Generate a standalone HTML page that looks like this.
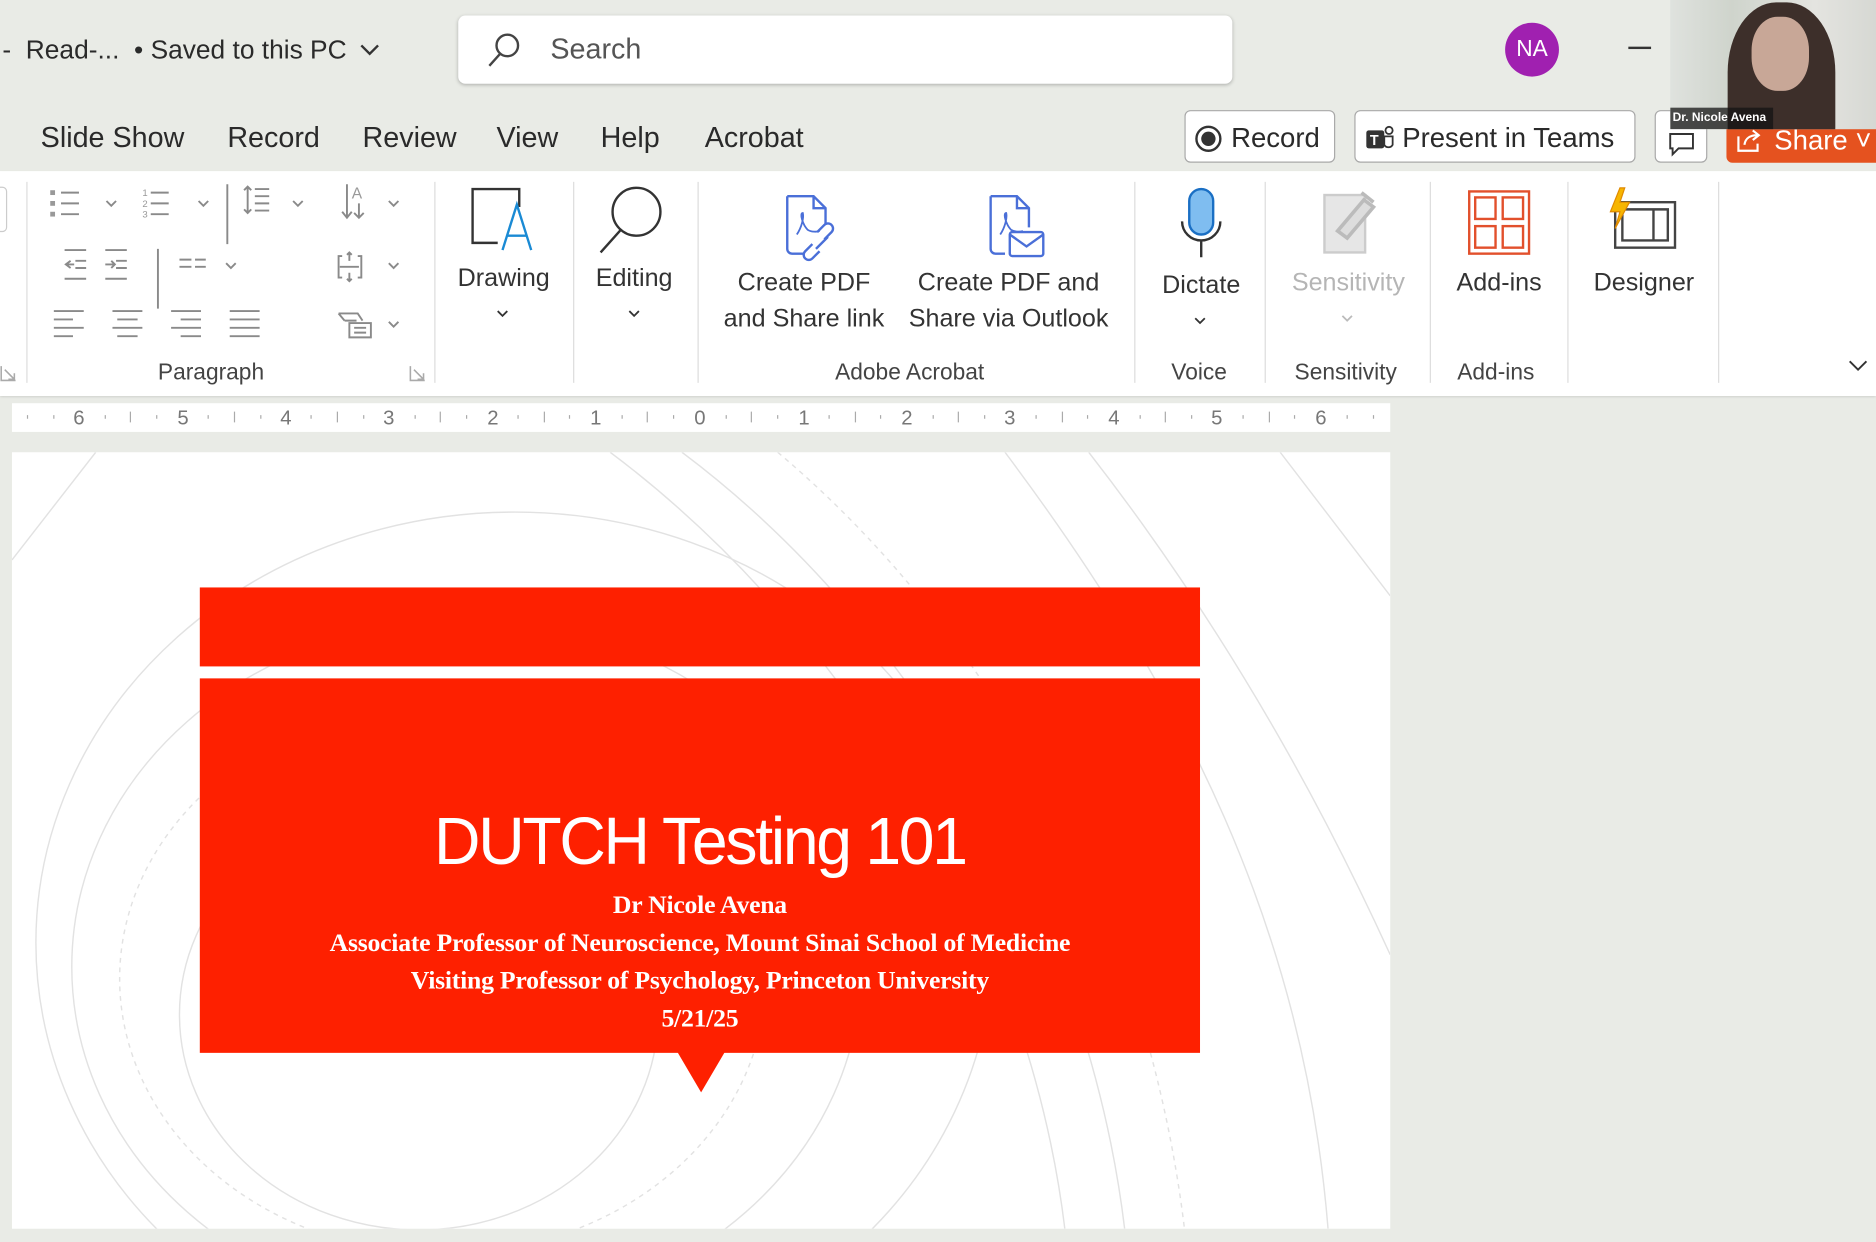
<!DOCTYPE html>
<html><head><meta charset="utf-8"><style>
html,body{margin:0;padding:0;width:1876px;height:1242px;overflow:hidden;background:#e9ebe6}
#w{position:absolute;left:0;top:0;width:1568px;height:1036px;transform:scale(1.19643);transform-origin:0 0;font-family:"Liberation Sans",sans-serif;color:#222;background:#e9ebe6;overflow:hidden}
.a{position:absolute}
.t{position:absolute;font-size:24px;color:#2a2a2a;white-space:nowrap}
.lbl{position:absolute;font-size:21px;color:#333;text-align:center;white-space:nowrap;line-height:30px}
.gl{position:absolute;font-size:19px;color:#444;white-space:nowrap}
.sep{position:absolute;top:152px;width:1px;height:168px;background:#dcdcdc}
.btn{position:absolute;top:92px;height:44px;border:1px solid #a9a9a9;border-radius:5px;background:#fff;font-size:23px;line-height:44px;box-sizing:border-box;color:#2a2a2a;white-space:nowrap}
</style></head><body><div id="w">

<!-- title bar -->
<div class="t" style="left:2px;top:29px;font-size:22px">-&nbsp; Read-... &nbsp;• Saved to this PC</div>
<svg class="a" style="left:300px;top:36px" width="18" height="12"><path d="M2 2 L9 9 L16 2" stroke="#333" stroke-width="2" fill="none"/></svg>
<div class="a" style="left:383px;top:13px;width:647px;height:57px;background:#fff;border-radius:6px;box-shadow:0 1px 3px rgba(0,0,0,.25)"></div>
<svg class="a" style="left:405px;top:26px" width="32" height="32"><circle cx="19" cy="12" r="9" stroke="#444" stroke-width="2" fill="none"/><path d="M13 19 L4 29" stroke="#444" stroke-width="2"/></svg>
<div class="t" style="left:460px;top:28px;color:#555">Search</div>
<div class="a" style="left:1258px;top:19px;width:45px;height:45px;border-radius:50%;background:#a020b0;color:#fff;font-size:19px;text-align:center;line-height:45px">NA</div>
<div class="a" style="left:1361px;top:39px;width:19px;height:2px;background:#333"></div>

<!-- tabs -->
<div class="t" style="left:34px;top:102px">Slide Show</div>
<div class="t" style="left:190px;top:102px">Record</div>
<div class="t" style="left:303px;top:102px">Review</div>
<div class="t" style="left:415px;top:102px">View</div>
<div class="t" style="left:502px;top:102px">Help</div>
<div class="t" style="left:589px;top:102px">Acrobat</div>

<div class="btn" style="left:990px;width:126px;padding-left:38px">Record</div>
<svg class="a" style="left:998px;top:104px" width="24" height="24"><circle cx="12" cy="12" r="10" stroke="#333" stroke-width="2" fill="none"/><circle cx="12" cy="12" r="6" fill="#333"/></svg>
<div class="btn" style="left:1132px;width:235px;padding-left:39px">Present in Teams</div>
<svg class="a" style="left:1140px;top:103px" width="26" height="26"><rect x="2" y="6" width="15" height="15" rx="2" fill="#333"/><text x="5" y="18" font-size="12" fill="#fff" font-weight="bold">T</text><circle cx="21" cy="6" r="3" stroke="#333" stroke-width="1.5" fill="none"/><path d="M17 11 h7 v7 a4 4 0 0 1-7 0z" stroke="#333" stroke-width="1.5" fill="none"/></svg>
<div class="btn" style="left:1383px;width:44px"></div>
<svg class="a" style="left:1394px;top:110px" width="24" height="22"><path d="M2 2 H21 V14 H9 L4 19 V14 H2Z" stroke="#333" stroke-width="1.6" fill="none"/></svg>
<div class="a" style="left:1443px;top:100px;width:125px;height:36px;background:#e5521f;border-radius:5px 0 0 5px;color:#fff;font-size:23px;line-height:34px;padding-left:40px;box-sizing:border-box;overflow:hidden">Share ˅</div>
<svg class="a" style="left:1450px;top:106px" width="24" height="22"><path d="M3 8 V20 H19 V14 M8 15 C9 9 13 7 19 7 M15 3 L20 7 L15 11" stroke="#fff" stroke-width="1.8" fill="none"/></svg>

<!-- video (on top) -->
<div class="a" style="left:1396px;top:0;width:172px;height:108px;background:linear-gradient(90deg,#dfe2de 0%,#cfd4cc 30%,#e4e4e0 70%,#d6d8d3 100%);overflow:hidden;z-index:5">
 <div class="a" style="left:48px;top:2px;width:90px;height:130px;border-radius:45% 45% 20% 20%;background:#3d2f2a"></div>
 <div class="a" style="left:68px;top:14px;width:48px;height:62px;border-radius:45%;background:#c8a797"></div>
 <div class="a" style="left:0;top:90px;width:84px;height:18px;background:rgba(20,20,20,.75);color:#fff;font-size:10px;font-weight:bold;line-height:18px;padding-left:2px;white-space:nowrap">Dr. Nicole Avena</div>
</div>

<!-- ribbon -->
<div class="a" style="left:0;top:143px;width:1568px;height:188px;background:#fff;box-shadow:0 1px 2px rgba(0,0,0,.15)"></div>
<div class="a" style="left:-6px;top:156px;width:10px;height:36px;border:1px solid #ccc;border-radius:4px"></div>
<div class="sep" style="left:22px"></div>
<div class="sep" style="left:363px"></div>
<div class="sep" style="left:479px"></div>
<div class="sep" style="left:583px"></div>
<div class="sep" style="left:948px"></div>
<div class="sep" style="left:1057px"></div>
<div class="sep" style="left:1195px"></div>
<div class="sep" style="left:1310px"></div>
<div class="sep" style="left:1436px"></div>

<!-- paragraph icons -->
<svg class="a" style="left:30px;top:150px" width="330" height="140" stroke="#8a8a8a" stroke-width="1.6" fill="none">
 <g fill="#999" stroke="none"><rect x="12" y="9" width="4" height="4"/><rect x="12" y="18" width="4" height="4"/><rect x="12" y="27" width="4" height="4"/></g>
 <path d="M21 11h15M21 20h15M21 29h15"/>
 <path d="M59 18l4 4 4-4M136 18l4 4 4-4M215 18l4 4 4-4M295 18l4 4 4-4"/>
 <text x="89" y="14" font-size="8" fill="#999" stroke="none">1</text><text x="89" y="23" font-size="8" fill="#999" stroke="none">2</text><text x="89" y="32" font-size="8" fill="#999" stroke="none">3</text>
 <path d="M96 11h15M96 20h15M96 29h15"/>
 <path d="M160 4v50M102 58v50"/>
 <path d="M177 6v22M174 9l3-3 3 3M174 25l3 3 3-3M183 8h12M183 14h12M183 20h12M183 26h12"/>
 <path d="M260 4v28M256 27l4 5 4-5M270 20v12M266 28l4 4 4-4"/>
 <text x="264" y="16" font-size="13" fill="#999" stroke="none">A</text>
 <path d="M24 59h18M33 68h9M33 74h9M24 83h18M29 68l-4 3 4 3M25 71h7"/>
 <path d="M58 59h18M67 68h9M67 74h9M58 83h18M63 68l3 3-3 3M58 71h7"/>
 <path d="M120 67h10M120 73h10M133 67h9M133 73h9M159 70l4 4 4-4"/>
 <path d="M256 64h-3v18h3M269 64h3v18h-3M254 73h16M262 61v7M260 63l2-2 2 2M262 78v7M260 83l2 2 2-2M295 70l4 4 4-4"/>
 <path d="M15 110h25M15 117h16M15 124h25M15 131h16"/>
 <path d="M64 110h25M68 117h17M64 124h25M68 131h17"/>
 <path d="M113 110h25M121 117h17M113 124h25M121 131h17"/>
 <path d="M162 110h25M162 117h25M162 124h25M162 131h25"/>
 <path d="M253 112h16l4 6M253 112l5 6M258 118h10M262 120h18v12h-18zM266 124h10M266 128h10M295 119l4 4 4-4"/>
</svg>
<div class="gl" style="left:132px;top:301px">Paragraph</div>
<svg class="a" style="left:0;top:305px" width="14" height="14" stroke="#aaa" fill="none" stroke-width="1.3"><path d="M1 1v12h12M4 4l8 8M12 7v5h-5"/></svg>
<svg class="a" style="left:342px;top:305px" width="14" height="14" stroke="#aaa" fill="none" stroke-width="1.3"><path d="M1 1v12h12M4 4l8 8M12 7v5h-5"/></svg>

<!-- Drawing -->
<svg class="a" style="left:392px;top:155px" width="58" height="58"><path d="M24 48H3V3H42V18" stroke="#333" stroke-width="2" fill="none"/><path d="M28 54L40 16L52 54M32 42H48" stroke="#1a8ad4" stroke-width="2" fill="none"/></svg>
<div class="lbl" style="left:370px;width:102px;top:218px">Drawing</div>
<svg class="a" style="left:414px;top:258px" width="12" height="9"><path d="M2 2l4 4 4-4" stroke="#333" stroke-width="1.5" fill="none"/></svg>
<!-- Editing -->
<svg class="a" style="left:498px;top:155px" width="62" height="58"><circle cx="34" cy="22" r="20" stroke="#333" stroke-width="2" fill="none"/><path d="M21 37L4 56" stroke="#333" stroke-width="2"/></svg>
<div class="lbl" style="left:480px;width:100px;top:218px">Editing</div>
<svg class="a" style="left:524px;top:258px" width="12" height="9"><path d="M2 2l4 4 4-4" stroke="#333" stroke-width="1.5" fill="none"/></svg>
<!-- Create PDF share link -->
<svg class="a" style="left:650px;top:160px" width="56" height="60" stroke="#4a6fd8" stroke-width="2" fill="none"><path d="M8 4H30L40 14V28M8 4V48a4 4 0 0 0 4 4H22M30 4V14H40"/><path d="M16 36c4-6 6-14 5-18-3 0 0 10 4 14 3 2 8 2 10 1" stroke-width="1.5"/><path d="M33 34l6-6a4 4 0 0 1 6 6l-6 6M35 50l-6 6a4 4 0 0 1-6-6l6-6M32 48l10-10"/></svg>
<div class="lbl" style="left:592px;width:160px;top:222px">Create PDF<br>and Share link</div>
<!-- Create PDF outlook -->
<svg class="a" style="left:820px;top:160px" width="56" height="60" stroke="#4a6fd8" stroke-width="2" fill="none"><path d="M8 4H30L40 14V30M8 4V48a4 4 0 0 0 4 4H20M30 4V14H40"/><path d="M16 36c4-6 6-14 5-18-3 0 0 10 4 14 3 2 8 2 10 1" stroke-width="1.5"/><rect x="24" y="34" width="28" height="20" rx="2"/><path d="M24 36l14 10 14-10"/></svg>
<div class="lbl" style="left:750px;width:186px;top:222px">Create PDF and<br>Share via Outlook</div>
<div class="gl" style="left:698px;top:301px">Adobe Acrobat</div>
<!-- Dictate -->
<svg class="a" style="left:984px;top:155px" width="40" height="62"><rect x="10" y="3" width="20" height="38" rx="10" fill="#7fbdf0" stroke="#1a6fc4" stroke-width="2"/><path d="M4 30a16 16 0 0 0 32 0M20 46v14" stroke="#333" stroke-width="2" fill="none"/></svg>
<div class="lbl" style="left:955px;width:98px;top:224px">Dictate</div>
<svg class="a" style="left:997px;top:264px" width="12" height="9"><path d="M2 2l4 4 4-4" stroke="#333" stroke-width="1.5" fill="none"/></svg>
<div class="gl" style="left:979px;top:301px">Voice</div>
<!-- Sensitivity -->
<svg class="a" style="left:1102px;top:155px" width="58" height="60"><rect x="5" y="8" width="34" height="48" fill="#e6e6e6" stroke="#ccc" stroke-width="2"/><path d="M16 38l22-26 8 6-22 26z M36 6l10 8" stroke="#bbb" stroke-width="3" fill="#ddd"/></svg>
<div class="lbl" style="left:1066px;width:122px;top:222px;color:#b5b5b5">Sensitivity</div>
<svg class="a" style="left:1120px;top:262px" width="12" height="9"><path d="M2 2l4 4 4-4" stroke="#bbb" stroke-width="1.5" fill="none"/></svg>
<div class="gl" style="left:1082px;top:301px">Sensitivity</div>
<!-- Add-ins -->
<svg class="a" style="left:1226px;top:158px" width="56" height="56" stroke="#e2502c" stroke-width="2" fill="none"><rect x="2" y="2" width="50" height="52"/><rect x="7" y="7" width="17" height="18"/><rect x="30" y="7" width="17" height="18"/><rect x="7" y="31" width="17" height="18"/><rect x="30" y="31" width="17" height="18"/></svg>
<div class="lbl" style="left:1200px;width:106px;top:222px">Add-ins</div>
<div class="gl" style="left:1218px;top:301px">Add-ins</div>
<!-- Designer -->
<svg class="a" style="left:1342px;top:155px" width="62" height="56"><rect x="8" y="14" width="50" height="38" stroke="#444" stroke-width="2" fill="none"/><path d="M14 20h38v26h-38zM40 20v26" stroke="#444" stroke-width="2" fill="none"/><path d="M12 2L4 22H12L8 36L20 14H12L16 2Z" fill="#f7b500" stroke="#e08a00"/></svg>
<div class="lbl" style="left:1318px;width:112px;top:222px">Designer</div>
<svg class="a" style="left:1544px;top:300px" width="18" height="12"><path d="M2 2l7 7 7-7" stroke="#333" stroke-width="1.6" fill="none"/></svg>

<!-- ruler -->
<div class="a" style="left:10px;top:337px;width:1152px;height:24px;background:#fff"></div>
<svg class="a" style="left:10px;top:337px" width="1152" height="24">
 <g fill="#777" font-size="17" font-family="Liberation Sans" text-anchor="middle">
 <text x="56" y="18">6</text><text x="143" y="18">5</text><text x="229" y="18">4</text><text x="315" y="18">3</text><text x="402" y="18">2</text><text x="488" y="18">1</text><text x="575" y="18">0</text><text x="662" y="18">1</text><text x="748" y="18">2</text><text x="834" y="18">3</text><text x="921" y="18">4</text><text x="1007" y="18">5</text><text x="1094" y="18">6</text>
 </g>
 <g stroke="#aaa" stroke-width="1">
 <path d="M13 10v3M35 10v3M78 10v3M99 7v9M121 10v3M164 10v3M186 7v9M208 10v3M250 10v3M272 7v9M294 10v3M337 10v3M358 7v9M380 10v3M423 10v3M445 7v9M466 10v3M510 10v3M531 7v9M553 10v3M597 10v3M618 7v9M640 10v3M683 10v3M705 7v9M726 10v3M770 10v3M791 7v9M813 10v3M856 10v3M878 7v9M899 10v3M943 10v3M964 7v9M986 10v3M1029 10v3M1051 7v9M1072 10v3M1116 10v3M1138 10v3"/>
 </g>
</svg>

<!-- slide -->
<div class="a" style="left:10px;top:378px;width:1152px;height:649px;background:#fff;overflow:hidden">
 <svg width="1152" height="649" fill="none" stroke="#e2e2e2" stroke-width="1.2">
  <ellipse cx="420" cy="410" rx="400" ry="360"/>
  <ellipse cx="380" cy="430" rx="330" ry="290"/>
  <ellipse cx="360" cy="440" rx="270" ry="230" stroke-dasharray="4 4"/>
  <ellipse cx="340" cy="470" rx="200" ry="180"/>
  <path d="M500 0 C700 150 850 400 880 649"/>
  <path d="M560 0 C760 150 900 400 930 649"/>
  <path d="M640 0 C830 160 950 400 980 649" stroke-dasharray="4 4"/>
  <path d="M830 0 C980 200 1080 400 1100 649"/>
  <path d="M900 0 C1040 180 1120 350 1152 420"/>
  <path d="M1060 0 L1152 120"/>
  <path d="M0 90 L70 0"/>
 </svg>
</div>
<div class="a" style="left:167px;top:491px;width:836px;height:66px;background:#fe2000"></div>
<div class="a" style="left:167px;top:567px;width:836px;height:313px;background:#fe2000"></div>
<svg class="a" style="left:566px;top:879px" width="40" height="36"><path d="M0 0H40L20 34Z" fill="#fe2000"/></svg>
<div class="a" style="left:167px;top:670px;width:836px;text-align:center;color:#fff;font-size:56px;letter-spacing:-2px;font-family:'Liberation Sans',sans-serif;transform:scaleX(0.96)">DUTCH Testing 101</div>
<div class="a" style="left:167px;top:741px;width:836px;text-align:center;color:#fff;font-family:'Liberation Serif',serif;font-weight:bold;font-size:21.5px;line-height:31.5px;letter-spacing:-0.2px">Dr Nicole Avena<br>Associate Professor of Neuroscience, Mount Sinai School of Medicine<br>Visiting Professor of Psychology, Princeton University<br>5/21/25</div>

</div></body></html>
